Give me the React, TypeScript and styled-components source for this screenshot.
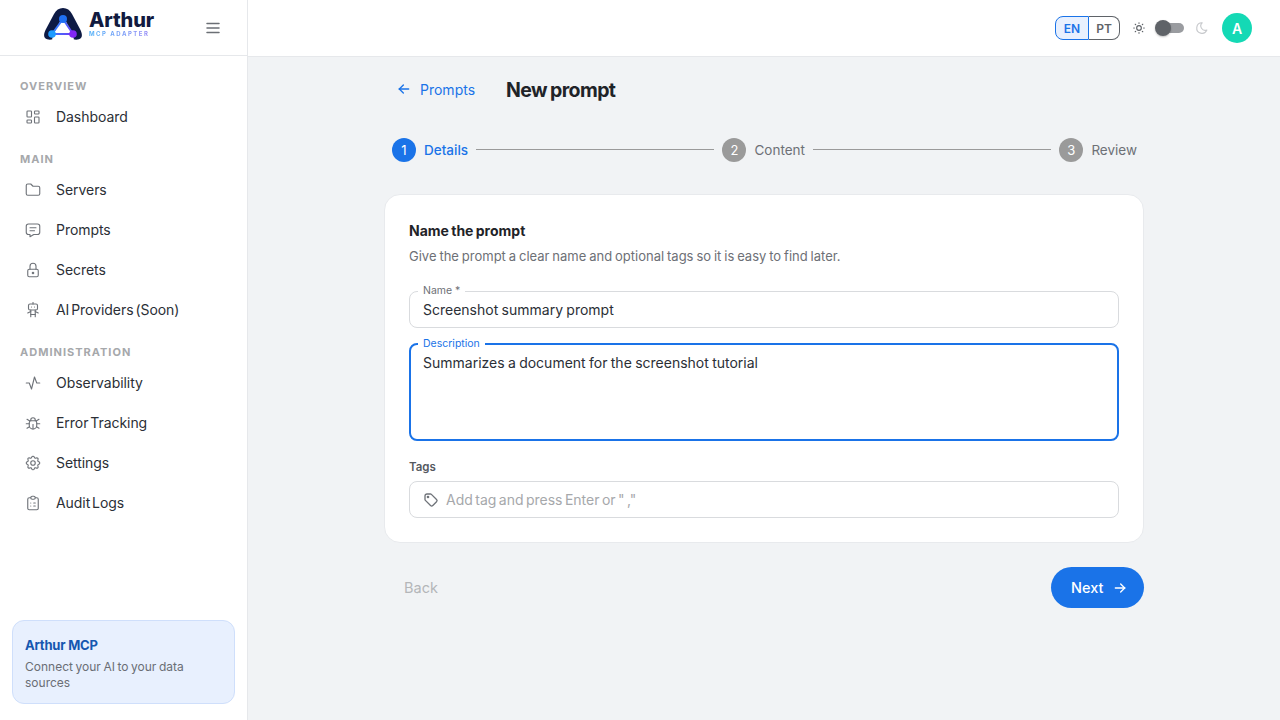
import React from 'react';
import styled, { createGlobalStyle } from 'styled-components';
import {
  TbActivity,
  TbArrowLeft,
  TbArrowRight,
  TbBug,
  TbClipboardList,
  TbFolder,
  TbLayoutDashboard,
  TbLock,
  TbMenu2,
  TbMessage,
  TbMoon,
  TbRobot,
  TbSettings,
  TbSun,
  TbTag,
} from 'react-icons/tb';

const FONT = `Inter, 'Open Sans', 'Liberation Sans', sans-serif`;

const GlobalStyle = createGlobalStyle`
  html, body {
    margin: 0;
    height: 100%;
    overflow: hidden;
  }
  * {
    box-sizing: border-box;
  }
  body {
    font-family: ${FONT};
    background: #f1f3f5;
    color: #1f2328;
  }
`;

const Shell = styled.div`
  display: flex;
  width: 1280px;
  height: 720px;
`;

const SideBar = styled.aside`
  width: 248px;
  flex-shrink: 0;
  display: flex;
  flex-direction: column;
  background: #ffffff;
  border-right: 1px solid #e6e8eb;
`;

const BrandRow = styled.div`
  height: 56px;
  flex-shrink: 0;
  display: flex;
  align-items: flex-start;
  padding: 8px 25px 0 44px;
  border-bottom: 1px solid #e6e8eb;
`;

const BrandText = styled.div`
  display: flex;
  flex-direction: column;
  margin-left: 7px;
  margin-top: 2px;
`;

const BrandName = styled.div`
  font-size: 20px;
  line-height: 21px;
  font-weight: 800;
  letter-spacing: -0.1px;
  color: #111a3f;
`;

const BrandSub = styled.div`
  font-size: 6px;
  line-height: 6px;
  font-weight: 700;
  letter-spacing: 1.5px;
  white-space: nowrap;
  background: linear-gradient(90deg, #4fb0f8, #9a86f6);
  -webkit-background-clip: text;
  background-clip: text;
  color: transparent;
`;

const MenuButton = styled.div`
  margin-left: auto;
  margin-top: 11px;
  color: #6b6f75;
  display: flex;
  font-size: 18px;
`;

const Nav = styled.nav`
  display: flex;
  flex-direction: column;
  padding: 22px 12px 0;
  flex: 1;
`;

const SectionLabel = styled.div`
  font-size: 11px;
  line-height: 16px;
  font-weight: 700;
  letter-spacing: 1px;
  color: #a6a8ab;
  padding-left: 8px;
  margin-bottom: 3px;
`;

const NavList = styled.div`
  display: flex;
  flex-direction: column;
  margin-bottom: 14px;
`;

const NavItem = styled.div`
  height: 40px;
  display: flex;
  align-items: center;
  padding: 0 0 1px 12px;
  font-size: 14px;
  letter-spacing: -0.05px;
  word-spacing: -2px;
  color: #2b2f36;
  svg {
    font-size: 18px;
    color: #6f7379;
    margin-right: 14px;
    flex-shrink: 0;
    stroke-width: 1.5;
  }
`;

const PromoCard = styled.div`
  margin: 0 12px 16px;
  height: 84px;
  padding: 15px 12px 0;
  background: #e8f0fe;
  border: 1px solid #cfdffb;
  border-radius: 12px;
`;

const PromoTitle = styled.div`
  font-size: 13px;
  line-height: 18px;
  font-weight: 700;
  letter-spacing: -0.2px;
  color: #1557b0;
`;

const PromoText = styled.div`
  font-size: 12px;
  line-height: 16px;
  margin-top: 5px;
  word-spacing: -0.8px;
  color: #6a6e75;
`;

const Main = styled.div`
  flex: 1;
  display: flex;
  flex-direction: column;
  min-width: 0;
`;

const TopBar = styled.header`
  height: 57px;
  flex-shrink: 0;
  display: flex;
  align-items: center;
  justify-content: flex-end;
  padding-right: 28px;
  background: #ffffff;
  border-bottom: 1px solid #e6e8eb;
`;

const LangGroup = styled.div`
  display: flex;
  height: 24px;
  margin-right: 12px;
`;

const LangButton = styled.div<{ $active?: boolean }>`
  width: ${p => (p.$active ? '34px' : '31px')};
  display: flex;
  align-items: center;
  justify-content: center;
  font-size: 12px;
  font-weight: 600;
  color: ${p => (p.$active ? '#1a73e8' : '#5f6368')};
  background: ${p => (p.$active ? '#e8f0fe' : '#ffffff')};
  border: 1px solid ${p => (p.$active ? '#1a73e8' : '#5f6368')};
  border-left-width: ${p => (p.$active ? '1px' : '0')};
  border-radius: ${p => (p.$active ? '8px 0 0 8px' : '0 8px 8px 0')};
`;

const ThemeIcon = styled.div<{ $dim?: boolean }>`
  display: flex;
  font-size: 14px;
  color: ${p => (p.$dim ? '#c8cacd' : '#5f6368')};
`;

const SwitchTrack = styled.div`
  position: relative;
  width: 24px;
  height: 10px;
  margin: 0 11px 0 14px;
  border-radius: 5px;
  background: #9a9ca0;
`;

const SwitchThumb = styled.div`
  position: absolute;
  left: -5px;
  top: -3px;
  width: 16px;
  height: 16px;
  border-radius: 50%;
  background: #5f6368;
  box-shadow: 0 1px 2px rgba(0, 0, 0, 0.25);
`;

const Avatar = styled.div`
  width: 30px;
  height: 30px;
  margin-left: 13px;
  border-radius: 50%;
  display: flex;
  align-items: center;
  justify-content: center;
  background: #14d9b5;
  color: #ffffff;
  font-size: 14px;
  font-weight: 600;
`;

const Content = styled.main`
  width: 760px;
  margin: 0 auto;
  display: flex;
  flex-direction: column;
`;

const PageHead = styled.div`
  display: flex;
  align-items: center;
  height: 66px;
  padding-left: 12px;
`;

const BackLink = styled.div`
  display: flex;
  align-items: center;
  gap: 8px;
  padding-bottom: 2px;
  font-size: 14px;
  color: #1a73e8;
  margin-right: 31px;
  svg {
    font-size: 16px;
  }
`;

const PageTitle = styled.h1`
  margin: 0;
  font-size: 19.5px;
  font-weight: 700;
  letter-spacing: -0.6px;
  word-spacing: -1px;
  color: #1f2328;
`;

const Stepper = styled.div`
  display: flex;
  align-items: center;
  padding: 0 7px 0 8px;
  margin-top: 15px;
  height: 24px;
`;

const StepDot = styled.div<{ $active?: boolean }>`
  width: 24px;
  height: 24px;
  flex-shrink: 0;
  border-radius: 50%;
  display: flex;
  align-items: center;
  justify-content: center;
  font-size: 13px;
  color: #ffffff;
  background: ${p => (p.$active ? '#1a73e8' : '#9a9a9a')};
`;

const StepLabel = styled.div<{ $active?: boolean }>`
  margin-left: 8px;
  font-size: 13.5px;
  font-weight: ${p => (p.$active ? 500 : 400)};
  padding-bottom: 1px;
  color: ${p => (p.$active ? '#1a73e8' : '#6d7076')};
`;

const StepLine = styled.div`
  flex: 1;
  height: 1px;
  margin: 0 8px 1px;
  background: #9a9a9a;
`;

const Card = styled.section`
  margin-top: 32px;
  height: 349px;
  padding: 24px;
  background: #ffffff;
  border: 1px solid #e8eaed;
  border-radius: 16px;
  display: flex;
  flex-direction: column;
`;

const CardTitle = styled.h2`
  margin: 0;
  font-size: 14px;
  line-height: 24px;
  font-weight: 700;
  word-spacing: -1px;
  color: #1f2328;
`;

const CardText = styled.p`
  margin: 1px 0 0;
  font-size: 13px;
  line-height: 24px;
  word-spacing: -0.75px;
  color: #6d7076;
`;

const Field = styled.div<{ $focused?: boolean; $tall?: boolean }>`
  position: relative;
  height: ${p => (p.$tall ? '98px' : '37px')};
  padding: ${p => (p.$tall ? '8px 13px' : '0 13px')};
  display: flex;
  align-items: ${p => (p.$tall ? 'flex-start' : 'center')};
  background: #ffffff;
  border: ${p => (p.$focused ? '2px solid #1a73e8' : '1px solid #d9dbde')};
  border-radius: 8px;
  font-size: 14px;
  line-height: 20px;
  word-spacing: -0.6px;
  color: #2b2f36;
`;

const NameField = styled(Field)`
  margin-top: 23px;
`;

const DescriptionField = styled(Field)`
  margin-top: 15px;
  padding-left: 12px;
`;

const FloatingLabel = styled.label<{ $focused?: boolean }>`
  position: absolute;
  left: ${p => (p.$focused ? '7px' : '8px')};
  top: -8px;
  padding: 0 5px;
  background: #ffffff;
  font-size: 10.5px;
  line-height: 14px;
  word-spacing: 0;
  color: ${p => (p.$focused ? '#1a73e8' : '#6d7076')};
`;

const TagsLabel = styled.div`
  margin-top: 16px;
  font-size: 11.5px;
  line-height: 20px;
  font-weight: 600;
  color: #55595f;
`;

const TagsField = styled(Field)`
  margin-top: 4px;
  word-spacing: -1.5px;
  color: #a6a8ab;
  svg {
    font-size: 16px;
    color: #6f7379;
    margin-right: 7px;
    flex-shrink: 0;
  }
`;

const Actions = styled.div`
  display: flex;
  align-items: center;
  justify-content: space-between;
  margin-top: 24px;
`;

const BackButton = styled.div`
  padding-left: 20px;
  font-size: 14.5px;
  color: #b4b6b9;
`;

const NextButton = styled.div`
  width: 93px;
  height: 41px;
  padding-left: 20px;
  border-radius: 21px;
  display: flex;
  align-items: center;
  gap: 9px;
  background: #1a73e8;
  color: #ffffff;
  font-size: 14.5px;
  font-weight: 500;
  svg {
    font-size: 16px;
  }
`;

const Logo = () => (
  <svg width="38" height="32" viewBox="0 0 38 32" fill="none">
    <defs>
      <linearGradient id="logoEdge" x1="5" y1="10" x2="33" y2="28" gradientUnits="userSpaceOnUse">
        <stop offset="0" stopColor="#19a0ff" />
        <stop offset="1" stopColor="#7a2cf5" />
      </linearGradient>
    </defs>
    <path
      d="M1 30 C-0.5 28 0 25.5 1.5 22 L10 6 C12 2 15 0 19 0 C23 0 26 2 28 6 L36.5 22 C38 25.5 38.5 28 37 30 C35 32 31 32 29 31 L9 31 C7 32 3 32 1 30 Z"
      fill="#0d1a44"
    />
    <path d="M19 8 L10 25 L8 31.5 L30 31.5 L28 25 Z" fill="#ffffff" />
    <path d="M19 11 L8 26 L29 26 Z" stroke="url(#logoEdge)" strokeWidth="2" strokeLinejoin="round" />
    <circle cx="19" cy="11" r="4" fill="#1f6ff2" />
    <circle cx="8" cy="26" r="3.8" fill="#1d9bff" />
    <circle cx="29" cy="26" r="3.8" fill="#8227f5" />
  </svg>
);

const SECTIONS = [
  {
    label: 'OVERVIEW',
    items: [{ icon: TbLayoutDashboard, name: 'Dashboard' }],
  },
  {
    label: 'MAIN',
    items: [
      { icon: TbFolder, name: 'Servers' },
      { icon: TbMessage, name: 'Prompts' },
      { icon: TbLock, name: 'Secrets' },
      { icon: TbRobot, name: 'AI Providers (Soon)' },
    ],
  },
  {
    label: 'ADMINISTRATION',
    items: [
      { icon: TbActivity, name: 'Observability' },
      { icon: TbBug, name: 'Error Tracking' },
      { icon: TbSettings, name: 'Settings' },
      { icon: TbClipboardList, name: 'Audit Logs' },
    ],
  },
];

const App = () => (
  <Shell>
    <GlobalStyle />
    <SideBar>
      <BrandRow>
        <Logo />
        <BrandText>
          <BrandName>Arthur</BrandName>
          <BrandSub>MCP ADAPTER</BrandSub>
        </BrandText>
        <MenuButton>
          <TbMenu2 />
        </MenuButton>
      </BrandRow>
      <Nav>
        {SECTIONS.map(section => (
          <React.Fragment key={section.label}>
            <SectionLabel>{section.label}</SectionLabel>
            <NavList>
              {section.items.map(item => (
                <NavItem key={item.name}>
                  <item.icon />
                  {item.name}
                </NavItem>
              ))}
            </NavList>
          </React.Fragment>
        ))}
      </Nav>
      <PromoCard>
        <PromoTitle>Arthur MCP</PromoTitle>
        <PromoText>Connect your AI to your data sources</PromoText>
      </PromoCard>
    </SideBar>
    <Main>
      <TopBar>
        <LangGroup>
          <LangButton $active>EN</LangButton>
          <LangButton>PT</LangButton>
        </LangGroup>
        <ThemeIcon>
          <TbSun />
        </ThemeIcon>
        <SwitchTrack>
          <SwitchThumb />
        </SwitchTrack>
        <ThemeIcon $dim>
          <TbMoon />
        </ThemeIcon>
        <Avatar>A</Avatar>
      </TopBar>
      <Content>
        <PageHead>
          <BackLink>
            <TbArrowLeft />
            Prompts
          </BackLink>
          <PageTitle>New prompt</PageTitle>
        </PageHead>
        <Stepper>
          <StepDot $active>1</StepDot>
          <StepLabel $active>Details</StepLabel>
          <StepLine />
          <StepDot>2</StepDot>
          <StepLabel>Content</StepLabel>
          <StepLine />
          <StepDot>3</StepDot>
          <StepLabel>Review</StepLabel>
        </Stepper>
        <Card>
          <CardTitle>Name the prompt</CardTitle>
          <CardText>Give the prompt a clear name and optional tags so it is easy to find later.</CardText>
          <NameField>
            <FloatingLabel>Name *</FloatingLabel>
            Screenshot summary prompt
          </NameField>
          <DescriptionField $focused $tall>
            <FloatingLabel $focused>Description</FloatingLabel>
            Summarizes a document for the screenshot tutorial
          </DescriptionField>
          <TagsLabel>Tags</TagsLabel>
          <TagsField>
            <TbTag />
            Add tag and press Enter or &quot; ,&quot;
          </TagsField>
        </Card>
        <Actions>
          <BackButton>Back</BackButton>
          <NextButton>
            Next
            <TbArrowRight />
          </NextButton>
        </Actions>
      </Content>
    </Main>
  </Shell>
);

export default App;
